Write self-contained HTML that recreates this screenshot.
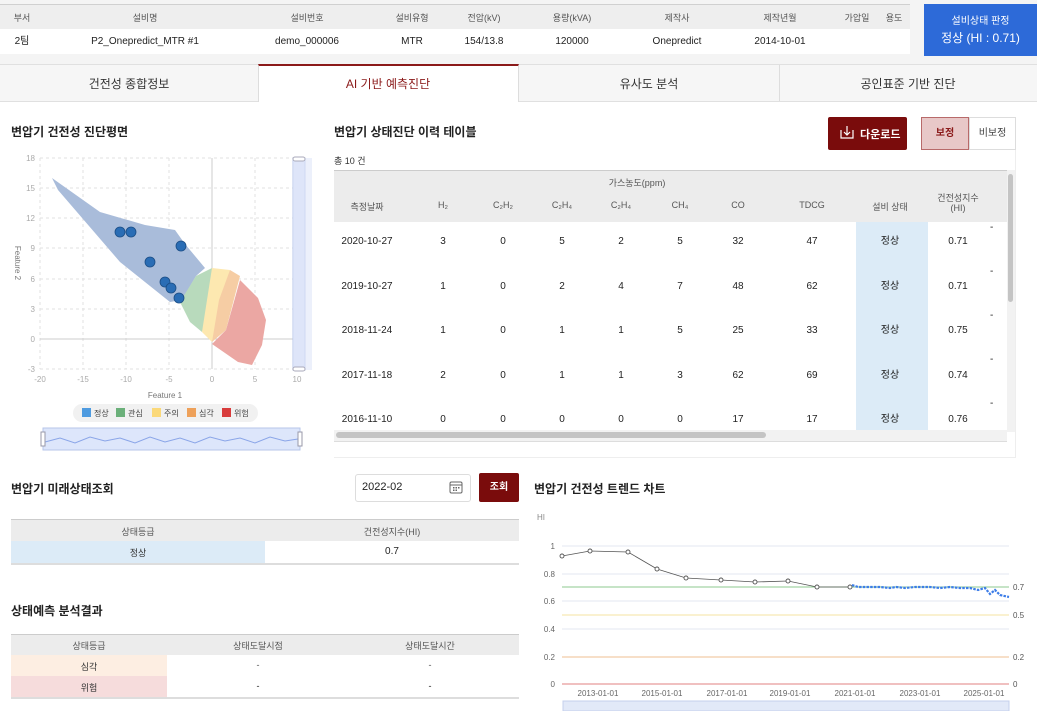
<!DOCTYPE html>
<html><head><meta charset="utf-8"><style>
*{margin:0;padding:0;box-sizing:border-box}
body{width:1037px;height:711px;overflow:hidden;background:#fff;font-family:"Liberation Sans","Noto Sans CJK KR",sans-serif;color:#222;position:relative}
.a{position:absolute}
.c{position:absolute;transform:translateX(-50%);white-space:nowrap}
.h{font-size:9px;color:#555}
.t{font-size:12px;font-weight:bold;color:#222}
.s{font-size:10px;line-height:12px}
</style></head><body>
<!-- top info -->
<div class="a" style="left:0;top:0;width:1037px;height:64px;background:#f4f4f4"></div>
<div class="a" style="left:0;top:4px;width:910px;height:25px;background:#eeeeee;border-top:1px solid #d0d0d0"></div>
<div class="a" style="left:0;top:29px;width:910px;height:25px;background:#fff"></div>
<div class="c h" style="left:22px;top:11px">부서</div>
<div class="c h" style="left:145px;top:11px">설비명</div>
<div class="c h" style="left:307px;top:11px">설비번호</div>
<div class="c h" style="left:412px;top:11px">설비유형</div>
<div class="c h" style="left:484px;top:11px">전압(kV)</div>
<div class="c h" style="left:572px;top:11px">용량(kVA)</div>
<div class="c h" style="left:677px;top:11px">제작사</div>
<div class="c h" style="left:780px;top:11px">제작년월</div>
<div class="c h" style="left:857px;top:11px">가압일</div>
<div class="c h" style="left:894px;top:11px">용도</div>
<div class="c s" style="left:22px;top:36px">2팀</div>
<div class="c s" style="left:145px;top:36px">P2_Onepredict_MTR #1</div>
<div class="c s" style="left:307px;top:36px">demo_000006</div>
<div class="c s" style="left:412px;top:36px">MTR</div>
<div class="c s" style="left:484px;top:36px">154/13.8</div>
<div class="c s" style="left:572px;top:36px">120000</div>
<div class="c s" style="left:677px;top:36px">Onepredict</div>
<div class="c s" style="left:780px;top:36px">2014-10-01</div>
<div class="a" style="left:924px;top:4px;width:113px;height:52px;background:#2d6ad8;color:#fff;text-align:center;font-size:10px;padding-top:9px;line-height:17px">설비상태 판정<br><span style="font-size:12px">정상 (HI : 0.71)</span></div>
<!-- tabs -->
<div class="a" style="left:0;top:64px;width:1037px;height:38px;background:#f6f6f6;border-top:1px solid #e0e0e0;border-bottom:1px solid #e0e0e0"></div>
<div class="a" style="left:258px;top:64px;width:261px;height:38px;background:#fff;border-top:2px solid #8b1a1a;border-left:1px solid #ddd;border-right:1px solid #ddd"></div>
<div class="a" style="left:779px;top:65px;width:1px;height:36px;background:#ddd"></div>
<div class="c" style="left:129px;top:75px;font-size:12px;color:#333">건전성 종합정보</div>
<div class="c" style="left:388px;top:75px;font-size:12px;color:#8b1a1a">AI 기반 예측진단</div>
<div class="c" style="left:649px;top:75px;font-size:12px;color:#333">유사도 분석</div>
<div class="c" style="left:908px;top:75px;font-size:12px;color:#333">공인표준 기반 진단</div>
<!-- scatter -->
<div class="a t" style="left:11px;top:123px">변압기 건전성 진단평면</div>
<svg class="a" style="left:0;top:140px" width="330" height="320" viewBox="0 140 330 320">
<g stroke="#e2e2e2" stroke-dasharray="3,3" stroke-width="1">
<line x1="40" y1="158" x2="297" y2="158"/><line x1="40" y1="188" x2="297" y2="188"/><line x1="40" y1="218" x2="297" y2="218"/><line x1="40" y1="248" x2="297" y2="248"/><line x1="40" y1="279" x2="297" y2="279"/><line x1="40" y1="309" x2="297" y2="309"/><line x1="40" y1="369" x2="297" y2="369"/>
<line x1="40" y1="158" x2="40" y2="369"/><line x1="83" y1="158" x2="83" y2="369"/><line x1="126" y1="158" x2="126" y2="369"/><line x1="169" y1="158" x2="169" y2="369"/><line x1="255" y1="158" x2="255" y2="369"/>
</g>
<line x1="40" y1="339" x2="297" y2="339" stroke="#ccc"/><line x1="212" y1="158" x2="212" y2="369" stroke="#ccc"/>
<g font-size="8" fill="#aaa" text-anchor="end"><text x="35" y="161">18</text><text x="35" y="191">15</text><text x="35" y="221">12</text><text x="35" y="251">9</text><text x="35" y="282">6</text><text x="35" y="312">3</text><text x="35" y="342">0</text><text x="35" y="372">-3</text></g>
<g font-size="8" fill="#aaa" text-anchor="middle"><text x="40" y="382">-20</text><text x="83" y="382">-15</text><text x="126" y="382">-10</text><text x="169" y="382">-5</text><text x="212" y="382">0</text><text x="255" y="382">5</text><text x="297" y="382">10</text></g>
<text x="165" y="398" font-size="8" fill="#777" text-anchor="middle">Feature 1</text>
<text x="15" y="263" font-size="8" fill="#777" text-anchor="middle" transform="rotate(90 15 263)">Feature 2</text>
<polygon points="52,178 100,212 145,225 175,230 185,244 200,262 205,268 196,276 182,300 170,302 120,262 58,190" fill="#a9bcda"/>
<polygon points="196,276 212,268 219,272 202,332 190,322 180,302" fill="#b8dabc"/>
<polygon points="212,268 230,270 222,300 212,342 202,332" fill="#fde8b0"/>
<polygon points="230,270 240,276 226,330 212,342 219,300" fill="#f6cda4"/>
<polygon points="240,280 258,298 266,320 262,345 252,365 238,362 212,344 226,330" fill="#eba7a3"/>
<g fill="#2a6db5" stroke="#1b4d85" stroke-width="0.8"><circle cx="120" cy="232" r="5"/><circle cx="131" cy="232" r="5"/><circle cx="150" cy="262" r="5"/><circle cx="181" cy="246" r="5"/><circle cx="165" cy="282" r="5"/><circle cx="171" cy="288" r="5"/><circle cx="179" cy="298" r="5"/></g>
<rect x="293" y="158" width="12" height="212" fill="#dbe4fa" stroke="#b7c6ea"/>
<rect x="293" y="158" width="19" height="212" fill="#dfe6f8" opacity="0.6"/>
<rect x="293" y="157" width="12" height="4" rx="2" fill="#fff" stroke="#aab"/>
<rect x="293" y="367" width="12" height="4" rx="2" fill="#fff" stroke="#aab"/>
<rect x="73" y="404" width="185" height="18" rx="9" fill="#f1f1f1"/>
<g font-size="8" fill="#444"><rect x="82" y="408" width="9" height="9" fill="#4e9be0"/><text x="94" y="416">정상</text><rect x="116" y="408" width="9" height="9" fill="#6bb07a"/><text x="128" y="416">관심</text><rect x="152" y="408" width="9" height="9" fill="#fbd97a"/><text x="164" y="416">주의</text><rect x="187" y="408" width="9" height="9" fill="#eea15a"/><text x="199" y="416">심각</text><rect x="222" y="408" width="9" height="9" fill="#d83c3c"/><text x="234" y="416">위험</text></g>
<rect x="43" y="428" width="257" height="22" fill="#dde6fb" stroke="#b7c6ea"/>
<polyline points="45,442 60,438 75,443 90,437 105,441 120,438 135,443 150,437 165,442 180,438 195,443 210,437 225,441 240,438 255,443 270,437 285,441 298,439" fill="none" stroke="#8aa5e8" stroke-width="1"/>
<rect x="41" y="432" width="4" height="14" fill="#fff" stroke="#99a"/><rect x="298" y="432" width="4" height="14" fill="#fff" stroke="#99a"/>
</svg>
<!-- history table -->
<div class="a t" style="left:334px;top:123px">변압기 상태진단 이력 테이블</div>
<div class="a" style="left:828px;top:117px;width:79px;height:33px;background:#7a0c0c;border-radius:2px;color:#fff;font-size:11px;font-weight:bold;padding:9px 0 0 32px">다운로드</div>
<svg class="a" style="left:839px;top:124px" width="16" height="16"><path d="M2 6v8h12V6M8 2v9M5 8l3 3 3-3" fill="none" stroke="#fff" stroke-width="1.2"/></svg>
<div class="a" style="left:921px;top:117px;width:48px;height:33px;background:#e8c8c8;border:1px solid #b86a6a;color:#8b1a1a;font-size:10px;font-weight:bold;text-align:center;line-height:31px">보정</div>
<div class="a" style="left:969px;top:117px;width:47px;height:33px;background:#fff;border:1px solid #ddd;color:#444;font-size:10px;text-align:center;line-height:31px">비보정</div>
<div class="a" style="left:334px;top:154px;font-size:9px;color:#333">총 10 건</div>
<div class="a" style="left:334px;top:150px;width:682px;height:308px;border-right:1px solid #eee;border-bottom:1px solid #eee"></div>
<div class="a" style="left:334px;top:170px;width:673px;height:52px;background:#ececec;border-top:1px solid #ccc"></div>
<div class="a" style="left:856px;top:222px;width:72px;height:208px;background:#dcebf7"></div>
<div class="c h" style="left:637px;top:176px">가스농도(ppm)</div>
<div class="c h" style="left:367px;top:200px">측정날짜</div>
<div class="c h" style="left:443px;top:200px">H₂</div>
<div class="c h" style="left:503px;top:200px">C₂H₂</div>
<div class="c h" style="left:562px;top:200px">C₂H₄</div>
<div class="c h" style="left:621px;top:200px">C₂H₄</div>
<div class="c h" style="left:680px;top:200px">CH₄</div>
<div class="c h" style="left:738px;top:200px">CO</div>
<div class="c h" style="left:812px;top:200px">TDCG</div>
<div class="c h" style="left:890px;top:200px">설비 상태</div>
<div class="c h" style="left:958px;top:193px;text-align:center;line-height:10px">건전성지수<br>(HI)</div>
<div class="c s" style="left:367px;top:236px">2020-10-27</div><div class="c s" style="left:443px;top:236px">3</div><div class="c s" style="left:503px;top:236px">0</div><div class="c s" style="left:562px;top:236px">5</div><div class="c s" style="left:621px;top:236px">2</div><div class="c s" style="left:680px;top:236px">5</div><div class="c s" style="left:738px;top:236px">32</div><div class="c s" style="left:812px;top:236px">47</div><div class="c s" style="left:890px;top:236px">정상</div><div class="c s" style="left:958px;top:236px">0.71</div>
<div class="c s" style="left:367px;top:281px">2019-10-27</div><div class="c s" style="left:443px;top:281px">1</div><div class="c s" style="left:503px;top:281px">0</div><div class="c s" style="left:562px;top:281px">2</div><div class="c s" style="left:621px;top:281px">4</div><div class="c s" style="left:680px;top:281px">7</div><div class="c s" style="left:738px;top:281px">48</div><div class="c s" style="left:812px;top:281px">62</div><div class="c s" style="left:890px;top:281px">정상</div><div class="c s" style="left:958px;top:281px">0.71</div>
<div class="c s" style="left:367px;top:325px">2018-11-24</div><div class="c s" style="left:443px;top:325px">1</div><div class="c s" style="left:503px;top:325px">0</div><div class="c s" style="left:562px;top:325px">1</div><div class="c s" style="left:621px;top:325px">1</div><div class="c s" style="left:680px;top:325px">5</div><div class="c s" style="left:738px;top:325px">25</div><div class="c s" style="left:812px;top:325px">33</div><div class="c s" style="left:890px;top:325px">정상</div><div class="c s" style="left:958px;top:325px">0.75</div>
<div class="c s" style="left:367px;top:370px">2017-11-18</div><div class="c s" style="left:443px;top:370px">2</div><div class="c s" style="left:503px;top:370px">0</div><div class="c s" style="left:562px;top:370px">1</div><div class="c s" style="left:621px;top:370px">1</div><div class="c s" style="left:680px;top:370px">3</div><div class="c s" style="left:738px;top:370px">62</div><div class="c s" style="left:812px;top:370px">69</div><div class="c s" style="left:890px;top:370px">정상</div><div class="c s" style="left:958px;top:370px">0.74</div>
<div class="c s" style="left:367px;top:414px">2016-11-10</div><div class="c s" style="left:443px;top:414px">0</div><div class="c s" style="left:503px;top:414px">0</div><div class="c s" style="left:562px;top:414px">0</div><div class="c s" style="left:621px;top:414px">0</div><div class="c s" style="left:680px;top:414px">0</div><div class="c s" style="left:738px;top:414px">17</div><div class="c s" style="left:812px;top:414px">17</div><div class="c s" style="left:890px;top:414px">정상</div><div class="c s" style="left:958px;top:414px">0.76</div>
<div class="a s" style="left:990px;top:222px">-</div><div class="a s" style="left:990px;top:266px">-</div><div class="a s" style="left:990px;top:310px">-</div><div class="a s" style="left:990px;top:354px">-</div><div class="a s" style="left:990px;top:398px">-</div>
<div class="a" style="left:1007px;top:170px;width:8px;height:262px;background:#f2f2f2"></div>
<div class="a" style="left:1008px;top:174px;width:5px;height:128px;background:#c4c4c4;border-radius:3px"></div>
<div class="a" style="left:334px;top:430px;width:673px;height:12px;background:#f2f2f2;border-bottom:1px solid #ddd"></div>
<div class="a" style="left:336px;top:432px;width:430px;height:6px;background:#c4c4c4;border-radius:3px"></div>
<!-- future state -->
<div class="a t" style="left:11px;top:480px">변압기 미래상태조회</div>
<div class="a" style="left:355px;top:474px;width:116px;height:28px;border:1px solid #ddd;border-radius:3px;font-size:11px;padding:6px 0 0 6px">2022-02</div>
<svg class="a" style="left:449px;top:480px" width="14" height="14"><rect x="1" y="2" width="12" height="11" rx="1.5" fill="none" stroke="#666"/><line x1="1" y1="5" x2="13" y2="5" stroke="#666"/><g fill="#666"><rect x="4" y="7" width="1.5" height="1.5"/><rect x="6.5" y="7" width="1.5" height="1.5"/><rect x="9" y="7" width="1.5" height="1.5"/><rect x="4" y="9.5" width="1.5" height="1.5"/><rect x="6.5" y="9.5" width="1.5" height="1.5"/></g></svg>
<div class="a" style="left:479px;top:473px;width:40px;height:29px;background:#7a0c0c;border-radius:2px;color:#fff;font-size:10px;font-weight:bold;text-align:center;line-height:29px">조회</div>
<div class="a" style="left:11px;top:519px;width:508px;height:22px;background:#ececec;border-top:1px solid #ccc"></div>
<div class="a" style="left:11px;top:541px;width:254px;height:22px;background:#dcebf7"></div>
<div class="a" style="left:11px;top:563px;width:508px;height:2px;background:#ddd"></div>
<div class="c h" style="left:138px;top:525px">상태등급</div><div class="c h" style="left:392px;top:525px">건전성지수(HI)</div>
<div class="c h" style="left:138px;top:546px;color:#333">정상</div><div class="c s" style="left:392px;top:546px">0.7</div>
<div class="a t" style="left:11px;top:602px">상태예측 분석결과</div>
<div class="a" style="left:11px;top:634px;width:508px;height:21px;background:#ececec;border-top:1px solid #ccc"></div>
<div class="a" style="left:11px;top:655px;width:156px;height:21px;background:#fdeee2"></div>
<div class="a" style="left:11px;top:676px;width:156px;height:21px;background:#f6dcdc"></div>
<div class="a" style="left:11px;top:697px;width:508px;height:2px;background:#ddd"></div>
<div class="c h" style="left:89px;top:639px">상태등급</div><div class="c h" style="left:258px;top:639px">상태도달시점</div><div class="c h" style="left:430px;top:639px">상태도달시간</div>
<div class="c h" style="left:89px;top:660px;color:#333">심각</div><div class="c h" style="left:258px;top:660px">-</div><div class="c h" style="left:430px;top:660px">-</div>
<div class="c h" style="left:89px;top:681px;color:#333">위험</div><div class="c h" style="left:258px;top:681px;color:#222">-</div><div class="c h" style="left:430px;top:681px;color:#222">-</div>
<!-- trend -->
<div class="a t" style="left:534px;top:480px">변압기 건전성 트렌드 차트</div>
<svg class="a" style="left:525px;top:505px" width="512" height="206" viewBox="525 505 512 206">
<text x="537" y="520" font-size="8" fill="#888">HI</text>
<g stroke="#e3e7f0"><line x1="562" y1="546" x2="1009" y2="546"/><line x1="562" y1="574" x2="1009" y2="574"/><line x1="562" y1="601" x2="1009" y2="601"/><line x1="562" y1="629" x2="1009" y2="629"/></g>
<line x1="562" y1="587" x2="1009" y2="587" stroke="#8cc98f"/>
<line x1="562" y1="615" x2="1009" y2="615" stroke="#f6e3a0"/>
<line x1="562" y1="657" x2="1009" y2="657" stroke="#efbf90"/>
<line x1="562" y1="684" x2="1009" y2="684" stroke="#e08080"/>
<g font-size="8" fill="#666" text-anchor="end"><text x="555" y="549">1</text><text x="555" y="577">0.8</text><text x="555" y="604">0.6</text><text x="555" y="632">0.4</text><text x="555" y="660">0.2</text><text x="555" y="687">0</text></g>
<g font-size="8" fill="#555"><text x="1013" y="590">0.7</text><text x="1013" y="618">0.5</text><text x="1013" y="660">0.2</text><text x="1013" y="687">0</text></g>
<g font-size="8" fill="#666" text-anchor="middle"><text x="598" y="696">2013-01-01</text><text x="662" y="696">2015-01-01</text><text x="727" y="696">2017-01-01</text><text x="790" y="696">2019-01-01</text><text x="855" y="696">2021-01-01</text><text x="920" y="696">2023-01-01</text><text x="984" y="696">2025-01-01</text></g>
<polyline points="562,556 590,551 628,552 657,569 686,578 721,580 755,582 788,581 817,587 850,587" fill="none" stroke="#555" stroke-width="0.8"/>
<g fill="#fff" stroke="#555" stroke-width="0.9"><circle cx="562" cy="556" r="2"/><circle cx="590" cy="551" r="2"/><circle cx="628" cy="552" r="2"/><circle cx="657" cy="569" r="2"/><circle cx="686" cy="578" r="2"/><circle cx="721" cy="580" r="2"/><circle cx="755" cy="582" r="2"/><circle cx="788" cy="581" r="2"/><circle cx="817" cy="587" r="2"/><circle cx="850" cy="587" r="2"/></g>
<polyline points="852,585 858,587 866,587 880,587 890,588 896,587 905,588 915,587 930,587 940,588 950,587 960,588 970,588 978,590 985,588 990,594 995,590 1000,595 1009,597" fill="none" stroke="#3d7de8" stroke-width="2.2" stroke-dasharray="2.5,1.2"/>
<rect x="563" y="701" width="446" height="10" fill="#e2e9f8" stroke="#c4d0ec"/>
</svg>
</body></html>
